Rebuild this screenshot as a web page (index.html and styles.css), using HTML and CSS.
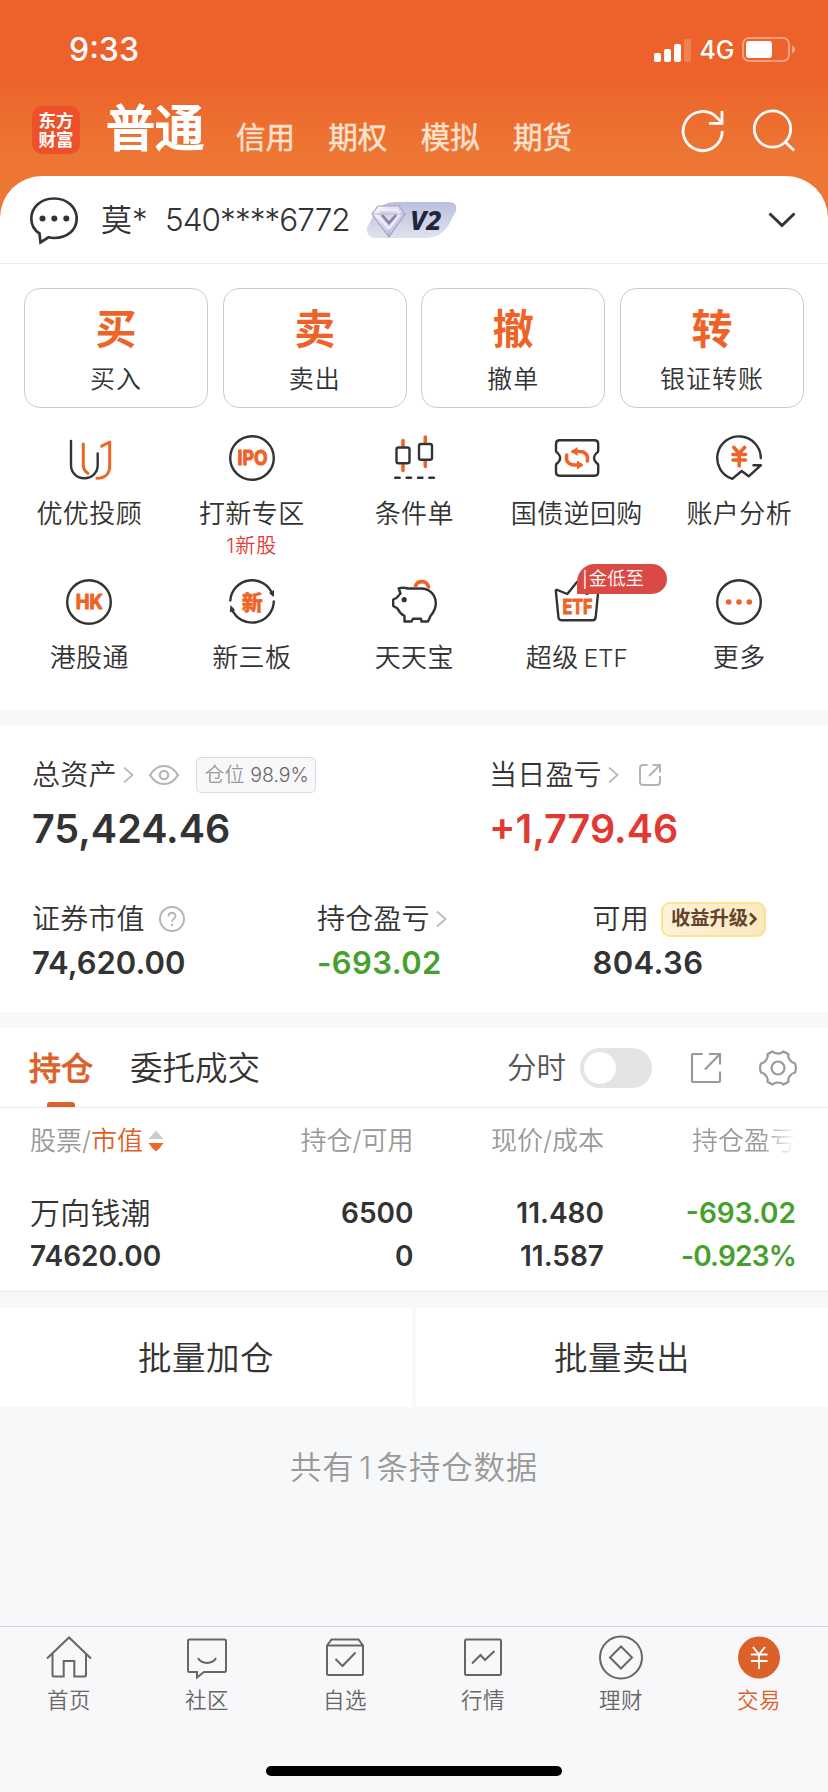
FILE: index.html
```html
<!DOCTYPE html>
<html lang="zh-CN">
<head>
<meta charset="utf-8">
<title>交易</title>
<link rel="stylesheet" href="styles.css">
</head>
<body>
<div class="app">
  <header class="top">
    <div class="status">
      <span class="time">9:33</span>
      <div class="status-right">
        <svg class="signal" width="37" height="23" viewBox="0 0 37 23" fill="#fff"><rect y="14" width="7" height="9" rx="2"/><rect x="10" y="10" width="7" height="13" rx="2"/><rect x="20" y="5" width="7" height="18" rx="2"/><rect x="30" width="7" height="23" rx="2" opacity=".2"/></svg>
        <span class="net">4G</span>
        <svg class="battery" width="54" height="26" viewBox="0 0 54 26"><rect x="1" y="1" width="46" height="23" rx="6" fill="none" stroke="#fff" stroke-opacity=".4" stroke-width="2"/><rect x="4" y="4" width="26" height="17" rx="3" fill="#fff"/><path d="M50 8.500c4 1.500 4 6.500 0 8z" fill="#fff" fill-opacity=".45"/></svg>
      </div>
    </div>
    <div class="nav">
      <div class="logo"><span>东方</span><span>财富</span></div>
      <span class="nav-main">普通</span>
      <nav class="nav-tabs"><span>信用</span><span>期权</span><span>模拟</span><span>期货</span></nav>
      <svg class="refresh" width="44" height="44" viewBox="0 0 44 44" fill="none" stroke="#fff" stroke-width="2.800"><path d="M41.300 22A19.600 19.600 0 1 1 36.300 9L41 13.500"/><path d="M41 2V14.400H28"/></svg>
      <svg class="search" width="44" height="44" viewBox="0 0 44 44" fill="none" stroke="#fff" stroke-width="2.800"><circle cx="20.500" cy="20" r="18.200"/><path d="M33.200 33L42 41.500"/></svg>
    </div>
  </header>

  <section class="card">
    <div class="account">
      <svg class="chat" width="50" height="50" viewBox="0 0 50 50"><path d="M11.500 38.500C6 35 3.300 30 3.300 23.500C3.300 12 13 3.500 26 3.500S48.700 12 48.700 23.500S39.500 43 26 43C24 43 22 42.700 20.500 42.300L12.500 47.500Z" fill="none" stroke="#333" stroke-width="2.700" stroke-linejoin="miter"/><g fill="#333"><circle cx="14.500" cy="23.500" r="3"/><circle cx="26.300" cy="23.500" r="3"/><circle cx="38.300" cy="23.500" r="3"/></g></svg>
      <span class="who">莫*</span>
      <span class="acct-no">540****6772</span>
      <div class="vip">
        <svg width="92" height="38" viewBox="0 0 92 38">
          <defs>
            <linearGradient id="vb" x1="0" y1="0" x2="0" y2="1"><stop offset="0" stop-color="#bac0dc"/><stop offset="1" stop-color="#e0e2ee"/></linearGradient>
            <linearGradient id="dg" x1="0" y1="0" x2="1" y2="1"><stop offset="0" stop-color="#fbfaff"/><stop offset="1" stop-color="#b6b0d2"/></linearGradient>
          </defs>
          <path d="M30 1H84Q92 2 90 10L82 25Q75 36 61 37H9Q0 36 1 27L8 13Q15 1 30 1Z" fill="url(#vb)"/>
          <path d="M12 5H33L39 13L23 36L6 13Z" fill="url(#dg)" stroke="#a5a0c6" stroke-width="1.200"/>
          <path d="M14 9H31L34 13.500L23 28L11 13.500Z" fill="#d9d7ec" stroke="#f4f3fb" stroke-width="1.500"/>
          <path d="M16 14L23 22L30 14" fill="none" stroke="#86829f" stroke-width="2.500"/>
          <path d="M6 13H39M23 28V36" stroke="#aaa5cb" stroke-width=".7"/>
        </svg>
        <span class="vip-text">V2</span>
      </div>
      <svg class="chev" width="28" height="18" viewBox="0 0 28 18" fill="none" stroke="#333" stroke-width="3"><path d="M1.500 2.500L14 14.500L26.500 2.500"/></svg>
    </div>

    <div class="actions">
      <div class="action"><b>买</b><span>买入</span></div>
      <div class="action"><b>卖</b><span>卖出</span></div>
      <div class="action"><b>撤</b><span>撤单</span></div>
      <div class="action"><b>转</b><span>银证转账</span></div>
    </div>

    <div class="grid">
      <div class="tool">
        <svg class="ic" viewBox="0 0 48 48"><path d="M6 7V31C6 39 12 44.200 19.300 44.200S32.700 39 32.700 31V19.500"/><g class="o"><path d="M18.300 10V31C18.300 35 20 37.500 23 39.300"/><path d="M36.700 12.200L44.700 8V32C44.700 40 39.500 44.300 32 44.300"/></g></svg>
        <span>优优投顾</span>
      </div>
      <div class="tool">
        <svg class="ic" viewBox="0 0 48 48"><circle cx="24" cy="24" r="21.800"/><text x="24.600" y="31.300" textLength="30" lengthAdjust="spacingAndGlyphs">IPO</text></svg>
        <span>打新专区</span><em>1新股</em>
      </div>
      <div class="tool">
        <svg class="ic" viewBox="0 0 48 48"><g class="o thick"><path d="M13 6.500V12M13 31V36.500M35.300 3V8M35.300 27V32.500"/></g><rect x="6.500" y="13.500" width="13" height="15.700" rx="2"/><rect x="29" y="10" width="13" height="15.700" rx="2"/><path d="M5.200 43.700h4.500M16.600 43.700h4.500M28 43.700h4.500M39.400 43.700h4.500"/></svg>
        <span>条件单</span>
      </div>
      <div class="tool">
        <svg class="ic" viewBox="0 0 48 48"><path d="M6.500 6.300H41.500Q45.200 6.300 45.200 10V17Q45 18.500 43.500 19Q38.500 24 43.500 29Q45 29.500 45.200 31V38Q45.200 41.700 41.500 41.700H6.500Q3 41.700 3 38V31Q3.200 29.500 4.700 29Q9.700 24 4.700 19Q3.200 18.500 3 17V10Q3 6.300 6.500 6.300Z"/><g class="o thick"><path d="M20 17.500H26.500C32.500 17.500 35.500 21.500 34.300 27"/><path d="M28 31H21.500C15.500 31 12.500 27 13.700 21"/></g><path class="of" d="M18 17.500L24.500 13V22ZM30.500 31L24 26.500V35.500Z"/></svg>
        <span>国债逆回购</span>
      </div>
      <div class="tool">
        <svg class="ic" viewBox="0 0 48 48"><path d="M45.800 24A21.800 21.800 0 1 0 17.300 44.900L26.700 37L33.700 42.300L46 31.200H38.500"/><g class="o thick"><path d="M18.700 13.300L24.200 19.500L29.700 13.300M24.200 20V32M18 20.500H30.500M18 26H30.500"/></g></svg>
        <span>账户分析</span>
      </div>
      <div class="tool">
        <svg class="ic" viewBox="0 0 48 48"><circle cx="24" cy="24" r="21.800"/><text x="24.300" y="31.300" textLength="27" lengthAdjust="spacingAndGlyphs">HK</text></svg>
        <span>港股通</span>
      </div>
      <div class="tool">
        <svg class="ic" viewBox="0 0 48 48"><path d="M2.300 22.500A21.800 21.800 0 0 1 44.500 16.500M45.800 23.500A21.800 21.800 0 0 1 4 31.500"/><path class="kf" d="M41 15L46 12L45.800 19ZM7 32L1.800 34.500L2.500 27Z"/><text class="cn" x="24.200" y="31.700">新</text></svg>
        <span>新三板</span>
      </div>
      <div class="tool">
        <svg class="ic" viewBox="0 0 48 48"><path d="M8.700 10.500Q13 9 18 10.500H31C40 10.500 45.800 17 45.800 25.500C45.800 31 43.500 34.500 40.500 38L38 43.500H31.500L31 40.700H23L21.500 43.500H14.500V38C11 36 9 34 7.500 30.500L3.200 28V21.500L6.500 20L10.500 15.500Z"/><path class="o thick" d="M25.500 8C28 2 36.500 2 38.500 9"/><circle class="kf" cx="14.200" cy="21.700" r="2.600"/></svg>
        <span>天天宝</span>
      </div>
      <div class="tool">
        <div class="ic-wrap">
          <svg class="ic" viewBox="0 0 48 48"><path d="M2.800 12.500Q3 11.500 4.500 12L14.300 16L24 4L33.700 16L43.500 12Q45.300 11.500 45.200 13L42.700 39Q42.300 42.300 39.500 42.300H8.700Q5.700 42.300 5.400 39Z"/><text x="24.400" y="35.500" textLength="30" lengthAdjust="spacingAndGlyphs">ETF</text></svg>
          <div class="promo"><i>|</i>金低至</div>
        </div>
        <span>超级<i class="latin">ETF</i></span>
      </div>
      <div class="tool">
        <svg class="ic" viewBox="0 0 48 48"><circle cx="24" cy="24" r="21.800"/><g class="of"><circle cx="13.700" cy="24" r="2.800"/><circle cx="24" cy="24" r="2.800"/><circle cx="34.300" cy="24" r="2.800"/></g></svg>
        <span>更多</span>
      </div>
    </div>
  </section>

  <section class="assets">
    <div class="row-a">
      <div class="cell">
        <div class="lab"><span>总资产</span>
          <svg class="gt" width="11" height="18" viewBox="0 0 11 18"><path d="M1 1.500L9.500 9L1 16.500"/></svg>
          <svg class="eye" width="32" height="22" viewBox="0 0 32 22"><path d="M2 11C6 4.500 11 2 16 2S26 4.500 30 11C26 17.500 21 20 16 20S6 17.500 2 11Z"/><circle cx="16" cy="11" r="4.200"/></svg>
          <span class="pos">仓位 <i>98.9%</i></span>
        </div>
        <div class="big">75,424.46</div>
      </div>
      <div class="cell">
        <div class="lab"><span>当日盈亏</span>
          <svg class="gt" width="11" height="18" viewBox="0 0 11 18"><path d="M1 1.500L9.500 9L1 16.500"/></svg>
          <svg class="share-s" width="24" height="24" viewBox="0 0 24 24"><path d="M9.500 2H5Q2 2 2 5V19Q2 22 5 22H19Q22 22 22 19V13M14.500 2H22V9.500M22 2L11 13"/></svg>
        </div>
        <div class="big up">+1,779.46</div>
      </div>
    </div>
    <div class="row-b">
      <div class="cell">
        <div class="lab"><span>证券市值</span>
          <svg class="help" width="26" height="26" viewBox="0 0 26 26"><circle cx="13" cy="13" r="12"/><path d="M9.500 10.500C9.500 5.500 16.500 5.800 16.500 10C16.500 12.500 13 12.800 13 15.800"/><path d="M13 17.800V20"/></svg>
        </div>
        <div class="mid">74,620.00</div>
      </div>
      <div class="cell">
        <div class="lab"><span>持仓盈亏</span><svg class="gt" width="11" height="18" viewBox="0 0 11 18"><path d="M1 1.500L9.500 9L1 16.500"/></svg></div>
        <div class="mid wide down">-693.02</div>
      </div>
      <div class="cell">
        <div class="lab"><span>可用</span><span class="upgrade">收益升级<svg width="10" height="14" viewBox="0 0 10 14"><path d="M2 1.500L7.500 7L2 12.500" fill="none" stroke="#64432c" stroke-width="2.500"/></svg></span></div>
        <div class="mid wide">804.36</div>
      </div>
    </div>
  </section>

  <section class="holdings">
    <div class="tabs">
      <div class="tab on">持仓</div>
      <div class="tab">委托成交</div>
      <span class="fs">分时</span>
      <div class="switch"></div>
      <svg class="share" width="32" height="32" viewBox="0 0 32 32"><path d="M12.700 2H3Q2 2 2 3V29Q2 30 3 30H29Q30 30 30 29V19.500M19 2H30V12.500M30 2L15 17.500"/></svg>
      <svg class="gear" width="38" height="38" viewBox="0 0 38 38"><path d="M13.500 2.500C16 5.200 22 5.200 24.500 2.500L29.500 5.300C28.500 9 31.500 13.500 36 14.500C37 17 37 21 36 23.500C31.500 24.500 28.500 29 29.500 32.700L24.500 35.500C22 32.800 16 32.800 13.500 35.500L8.500 32.700C9.500 29 6.500 24.500 2 23.500C1 21 1 17 2 14.500C6.500 13.500 9.500 9 8.500 5.300Z"/><circle cx="19" cy="19" r="6.500"/></svg>
    </div>
    <div class="trow thead">
      <span class="first">股票/<em>市值</em><svg width="16" height="22" viewBox="0 0 16 22"><path d="M8 .5L15.500 9H.5Z" fill="#ccc"/><path d="M.5 13H15.500Q12 18.500 8 21.500Q4 18.500 .5 13Z" fill="#ea6a2c"/></svg></span>
      <span>持仓/可用</span><span>现价/成本</span><span class="fade">持仓盈亏</span>
    </div>
    <div class="trow stock"><span class="name">万向钱潮</span><span>6500</span><span>11.480</span><span class="down">-693.02</span></div>
    <div class="trow stock second"><span>74620.00</span><span>0</span><span>11.587</span><span class="down pct">-0.923%</span></div>
  </section>

  <div class="batch"><button>批量加仓</button><button>批量卖出</button></div>
  <p class="total">共有<i>1</i>条持仓数据</p>

  <footer class="bar">
    <div class="items">
      <div class="item"><svg viewBox="0 0 48 48"><path d="M2 24.500L24 3.500L46 24.500M7.500 20V41Q7.500 42.500 9 42.500H18.700V27H29.300V42.500H39.500Q41 42.500 41 41V20"/></svg><span>首页</span></div>
      <div class="item"><svg viewBox="0 0 48 48"><path d="M6.500 5.500H41.500Q43 5.500 43 7V36.500Q43 38 41.500 38H21L14 43.500V38H6.500Q5 38 5 36.500V7Q5 5.500 6.500 5.500ZM15 24C18.500 30.500 29.500 30.500 33 24"/></svg><span>社区</span></div>
      <div class="item"><svg viewBox="0 0 48 48"><path d="M6 11.500L10.500 5.500H37.500L42 11.500V39.500Q42 41 40.500 41H7.500Q6 41 6 39.500ZM6 11.500H42M14.500 25L21.500 32L34.500 18.500"/></svg><span>自选</span></div>
      <div class="item"><svg viewBox="0 0 48 48"><rect x="6" y="5.500" width="36" height="35.500" rx="1.500"/><path d="M13 29.500L21.500 21L26 26L35.500 17"/></svg><span>行情</span></div>
      <div class="item"><svg viewBox="0 0 48 48"><circle cx="24" cy="23.500" r="21"/><path d="M24 12.500L35 23.500L24 34.500L13 23.500Z"/></svg><span>理财</span></div>
      <div class="item on"><svg viewBox="0 0 48 48"><circle class="disc" cx="24" cy="23.500" r="21"/><path class="yen" d="M18 13L24 20.500L30 13M24 20.500V35M16 20.500H32.500M16 27H32.500"/></svg><span>交易</span></div>
    </div>
    <div class="home"></div>
  </footer>
</div>
</body>
</html>
```
FILE: styles.css
```css
* { box-sizing: border-box; }
body { margin: 0; background: #f7f8fa; color: #333; font-family: Inter, "Noto Sans CJK SC", sans-serif; }
svg { display: block; flex: none; }
em, i { font-style: normal; }
.app { width: 828px; height: 1792px; display: flex; flex-direction: column; overflow: hidden; line-height: 1; white-space: nowrap; font-weight: 350; }

/* header */
.top { height: 222px; margin-bottom: -46px; flex: none; background: linear-gradient(#ec622a 0, #ec622a 75px, #ed7533 150px, #ed7834 100%); color: #fff; }
.status { height: 100px; padding: 0 32.500px 0 69px; display: flex; justify-content: space-between; align-items: center; }
.time { font-size: 32px; font-weight: 500; }
.status-right { display: flex; align-items: center; }
.net { font-size: 25px; font-weight: 500; margin: 0 7px 0 8px; }
.nav { height: 76px; padding: 0 32px; display: flex; align-items: center; }
.nav > * { flex: none; }
.logo { width: 48px; height: 48px; margin-top: -16px; padding-top: 5px; border-radius: 10px; background: #ee5029; font-size: 17.500px; font-weight: 700; line-height: 19px; text-align: center; display: flex; flex-direction: column; align-items: center; }
.nav-main { margin: -19px 0 0 26px; width: 98px; font-size: 49px; font-weight: 400; -webkit-text-stroke: 2px #fff; }
.nav-tabs { display: flex; gap: 33.300px; margin-left: 32px; font-size: 29.500px; font-weight: 400; color: #fde0cd; -webkit-text-stroke: .5px #fde0cd; }
.refresh { margin: -15px 0 0 109.500px; }
.search { margin: -15px 0 0 27px; }

/* account card */
.card { height: 534px; flex: none; background: #fff; border-radius: 42px 42px 0 0; }
.account { height: 88px; padding: 0 32px 0 28px; display: flex; align-items: center; border-bottom: 1px solid #eee; font-size: 32px; }
.who { margin-left: 23px; width: 64px; font-size: 31px; }
.acct-no { width: 187px; font-size: 31.500px; letter-spacing: -.95px; }
.vip { position: relative; margin-left: 14px; }
.vip-text { position: absolute; left: 44px; top: 5px; font: italic 800 27px/28px "Noto Sans", sans-serif; color: #22263a; }
.chev { margin-left: auto; }
.actions { margin-top: 24px; padding: 0 24px; display: grid; grid-template-columns: repeat(4, 1fr); gap: 14.700px; }
.action { height: 120px; border: 1.500px solid #ccc; border-radius: 16px; display: flex; flex-direction: column; align-items: center; padding-top: 20px; }
.action b { font-size: 41px; font-weight: 700; color: #ee6328; }
.action span { margin-top: 17px; font-size: 25px; letter-spacing: 1px; }
.grid { padding: 26px 7.500px 0 8px; display: grid; grid-template-columns: repeat(5, 1fr); grid-auto-rows: 144px; }
.tool { display: flex; flex-direction: column; align-items: center; }
.tool > span { margin-top: 19px; font-size: 26px; letter-spacing: .4px; }
.tool em { margin-top: 9px; font-size: 20px; color: #e03a33; letter-spacing: 1px; }
.latin { margin-left: 5px; font-size: 24.500px; letter-spacing: -.2px; }
.ic { width: 48px; height: 48px; fill: none; stroke: #333; stroke-width: 2.400px; stroke-linecap: round; stroke-linejoin: round; }
.ic .o { stroke: #ee6328; stroke-width: 3px; }
.ic .thick { stroke-width: 3.600px; }
.ic .of { fill: #ee6328; stroke: none; }
.ic .kf { fill: #333; stroke: none; }
.ic text { fill: #ee6328; stroke: #ee6328; stroke-width: 1.100px; font-size: 20px; font-weight: 700; text-anchor: middle; }
.ic .cn { stroke-width: .4px; font-size: 21px; font-weight: 900; }
.ic-wrap { position: relative; }
.promo { position: absolute; left: 24px; top: -14px; width: 90px; height: 30px; padding-left: 5.500px; border-radius: 18px 15px 15px 0; background: #d84a43; color: #fff; font-size: 18.400px; line-height: 29px; }
.promo i { display: inline-block; width: 6.500px; font-size: 16px; font-weight: 400; }

/* assets */
.assets { height: 286px; flex: none; margin-top: 16px; padding: 31px 32px 0; background: #fff; }
.row-a { height: 144px; display: grid; grid-template-columns: 457px 1fr; }
.row-b { display: grid; grid-template-columns: 285px 275.500px 1fr; }
.lab { height: 36px; display: flex; align-items: center; font-size: 28px; letter-spacing: .2px; }
.gt { margin-left: 6px; fill: none; stroke: #bbb; stroke-width: 1.800px; }
.eye { margin-left: 14px; fill: none; stroke: #b4b4b4; stroke-width: 2.200px; }
.pos { margin-left: 16px; width: 120px; height: 36px; border: 1.500px solid #ddd; border-radius: 5px; background: #f8f8fa; color: #999; font-size: 20px; line-height: 34px; letter-spacing: 0; padding-left: 8px; }
.pos i { color: #666; font-size: 19.500px; }
.share-s { margin-left: 19px; fill: none; stroke: #b4b4b4; stroke-width: 2px; }
.help { margin-left: 14px; fill: none; stroke: #b4b4b4; stroke-width: 1.900px; }
.big { margin-top: 17px; font-size: 39.500px; font-weight: 600; }
.mid { margin-top: 10px; font-size: 31px; font-weight: 600; }
.wide { letter-spacing: .4px; }
.up { color: #e03a33; }
.down { color: #46a02c; }
.upgrade { margin-left: 12px; width: 105px; height: 35px; padding-left: 8px; border: 2px solid #fbe48c; border-radius: 9px; background: linear-gradient(100deg, #fdf3dc, #fae8bd); color: #64432c; font-size: 19.300px; font-weight: 700; letter-spacing: 0; display: flex; align-items: center; }

/* holdings */
.holdings { height: 264px; flex: none; margin-top: 16px; background: #fff; border-bottom: 1px solid #e8e8e8; }
.tabs { height: 80px; padding: 0 31px 0 29px; border-bottom: 1px solid #eaeaea; display: flex; align-items: center; font-size: 32.500px; }
.tab { height: 79px; line-height: 81px; margin-right: 37px; }
.tab.on { position: relative; width: 64px; color: #dc6128; font-weight: 400; -webkit-text-stroke: 1px #dc6128; font-size: 32px; }
.tab.on::after { content: ""; position: absolute; left: 18px; bottom: 0; width: 28px; height: 5px; border-radius: 3px 3px 0 0; background: #dc6128; }
.fs { margin-left: auto; font-size: 29.500px; color: #555; }
.switch { width: 72px; height: 40px; margin-left: 14px; padding: 4px; border-radius: 20px; background: #e4e4e6; }
.switch::before { content: ""; display: block; width: 32px; height: 32px; border-radius: 50%; background: #fff; }
.share { margin-left: 38px; fill: none; stroke: #999; stroke-width: 2.200px; }
.gear { margin-left: 37px; fill: none; stroke: #999; stroke-width: 2.200px; stroke-linejoin: round; }
.trow { display: grid; grid-template-columns: 200px 183.500px 190.500px 192px; padding-left: 30px; align-items: center; }
.trow > * { text-align: right; }
.trow > :first-child { text-align: left; }
.thead { height: 66px; font-size: 26px; color: #999; }
.thead em { color: #dc6128; }
.first { display: flex; align-items: center; }
.first svg { margin-left: 5px; }
.fade { background: linear-gradient(90deg, #999 82%, #fff); -webkit-background-clip: text; background-clip: text; color: transparent; line-height: 36px; }
.stock { margin-top: 17px; height: 44px; font-size: 28px; font-weight: 600; }
.stock.second { margin-top: -1px; }
.stock .pct { letter-spacing: -.8px; }
.name { font-size: 30px; font-weight: 350; letter-spacing: .2px; }

.batch { height: 99px; flex: none; margin-top: 16px; display: grid; grid-template-columns: 412px 412px; gap: 4px; }
.batch button { border: 0; padding: 2px 0 0; background: #fff; color: #333; font: 350 33.500px/1 Inter, "Noto Sans CJK SC", sans-serif; letter-spacing: .5px; }
.total { margin: 45px 0 0; font-size: 31.500px; line-height: 32px; letter-spacing: .8px; color: #999; text-align: center; }
.total i { display: inline-block; width: 22px; text-align: center; }

/* bottom bar */
.bar { height: 166px; flex: none; margin-top: auto; border-top: 1px solid #d3d3de; background: #f8f8fa; display: flex; flex-direction: column; }
.items { display: grid; grid-template-columns: repeat(6, 1fr); padding-top: 7px; }
.item { display: flex; flex-direction: column; align-items: center; font-size: 21.500px; color: #666; }
.item svg { width: 48px; height: 48px; fill: none; stroke: #666; stroke-width: 2px; }
.item span { margin-top: 8px; letter-spacing: .4px; }
.item.on { color: #dc6128; }
.item .disc { fill: #dc6128; stroke: none; }
.item .yen { stroke: #fff; }
.home { margin: auto auto 16px; width: 296px; height: 10px; border-radius: 5px; background: #000; }
```
